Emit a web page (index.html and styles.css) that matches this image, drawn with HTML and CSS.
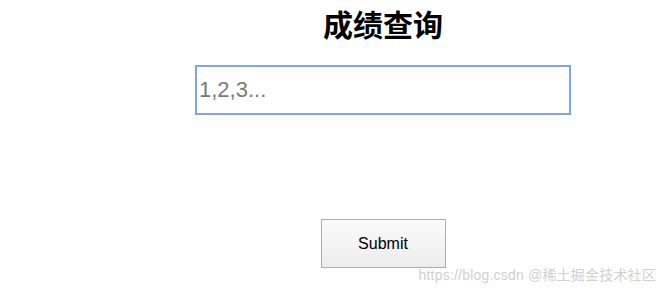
FILE: index.html
```html
<!DOCTYPE html>
<html>
<head>
	<meta charset="utf-8">
	<meta name="viewport" content="width=device-width, initial-scale=1">
	<title>成绩查询</title>
	<link rel="stylesheet" href="styles.css">
</head>
<body>

  <div class="wrap">
    <h1 class="title">成绩查询</h1>
    <form class="query" onsubmit="return false">
      <input type="text" class="ids" placeholder="1,2,3..." autofocus>
      <button type="submit" class="submit">Submit</button>
    </form>
  </div>

  <div class="mark">https://blog.csdn @稀土掘金技术社区</div>

</body>
</html>
```

FILE: styles.css
```css
body {
  margin: 0;
  background: #fff;
  font-family: Arial, "Liberation Sans", "Noto Sans CJK SC", sans-serif;
}

.wrap {
  padding: 5px 0 0 100px;
  display: flex;
  flex-direction: column;
  align-items: center;
}

.title {
  margin: 0;
  font-size: 30px;
  line-height: 36px;
  font-weight: bold;
  color: #000;
  font-family: "Noto Sans CJK SC", sans-serif;
}

.query {
  margin-top: 24px;
  display: flex;
  flex-direction: column;
  align-items: center;
}

.ids {
  box-sizing: border-box;
  width: 376px;
  height: 50px;
  padding: 0 2px;
  border: 2px solid #80a6e6;
  outline: none;
  font-size: 22px;
  font-family: Arial, "Liberation Sans", sans-serif;
  color: #333;
}

.ids::placeholder {
  color: #7a7a7a;
}

.submit {
  margin-top: 104px;
  width: 125px;
  height: 49px;
  border: 1px solid #adadad;
  border-radius: 0;
  background: linear-gradient(#fbfbfb, #ececec);
  font-size: 16px;
  font-family: Arial, "Liberation Sans", sans-serif;
  color: #000;
}

.mark {
  position: absolute;
  right: 10px;
  top: 264px;
  font-size: 14px;
  color: #d0d0d0;
  font-family: "Liberation Sans", "Noto Sans CJK SC", sans-serif;
  letter-spacing: 0.2px;
}
```
